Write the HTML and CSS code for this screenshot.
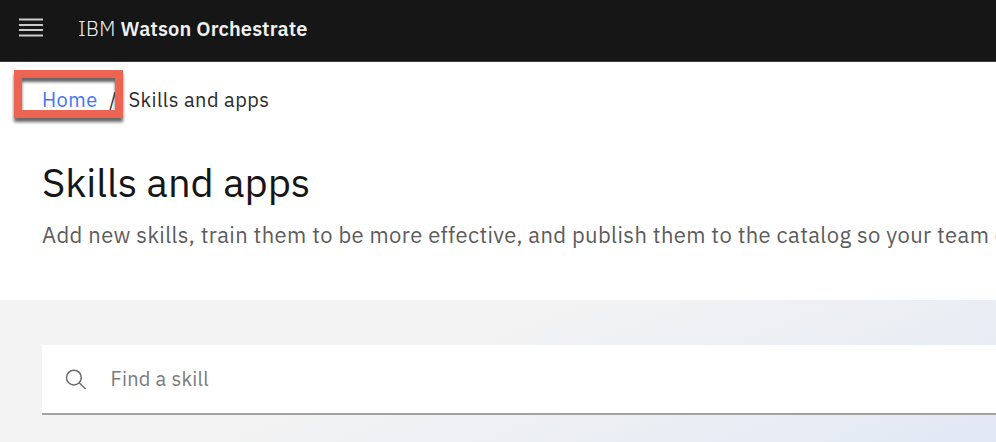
FILE: index.html
```html
<!DOCTYPE html>
<html lang="en">
<head>
<meta charset="utf-8">
<title>IBM Watson Orchestrate</title>
<link rel="stylesheet" href="styles.css">
</head>
<body>
<header class="topbar">
  <svg class="menu" width="24" height="20" viewBox="0 0 24 20" fill="none" stroke="#cbcbcb" stroke-width="2"><path d="M0 1.5h24M0 7h24M0 12h24M0 17.5h24"/></svg>
  <div class="brand"><span class="brand-ibm">IBM</span><strong class="brand-name">Watson Orchestrate</strong></div>
</header>
<section class="intro">
  <nav class="crumbs">
    <a class="home">Home</a><span class="slash">/</span><span class="current">Skills and apps</span>
    <div class="callout"></div>
  </nav>
  <h1 class="title">Skills and apps</h1>
  <p class="lead">Add new skills, train them to be more effective, and publish them to the catalog so your team c</p>
</section>
<main class="content">
  <div class="search">
    <svg class="search-icon" width="22" height="22" viewBox="0 0 22 22" fill="none" stroke="#6c6c6c" stroke-width="1.5"><circle cx="8.9" cy="9.6" r="7.4"/><path d="M14.2 14.8l6.4 6.2"/></svg>
    <span class="placeholder">Find a skill</span>
  </div>
</main>
</body>
</html>
```
FILE: styles.css
```css
* { box-sizing: border-box; }
body {
  margin: 0;
  width: 996px;
  height: 442px;
  overflow: hidden;
  display: flex;
  flex-direction: column;
  background: #fff;
  color: #161616;
  font-family: "IBM Plex Sans", Roboto, sans-serif;
}
.topbar {
  height: 62px;
  flex: none;
  display: flex;
  align-items: center;
  padding: 0 19px 5px;
  background: #161616;
  border-bottom: 1px solid #3a3a3a;
}
.menu { margin-right: 35px; }
.brand {
  display: flex;
  gap: 5.5px;
  color: #f0f0f0;
  font-size: 20px;
  line-height: 28px;
  white-space: nowrap;
  padding-top: 1px;
}
.brand-ibm { width: 37px; font-weight: 300; letter-spacing: .3px; }
.brand-name { font-weight: 600; letter-spacing: .14px; }
.intro { height: 238px; flex: none; padding-left: 42px; }
.crumbs {
  position: relative;
  display: flex;
  padding-top: 24px;
  font-size: 20px;
  line-height: 28px;
  white-space: nowrap;
}
.home { width: 67px; color: #3f76f6; letter-spacing: .45px; }
.slash { width: 19.5px; color: #333; }
.current { color: #2b2b2b; letter-spacing: .44px; }
.callout {
  position: absolute;
  left: -28px;
  top: 8px;
  width: 109px;
  height: 48px;
  border: 8px solid #ed6552;
  box-shadow: 0 4px 3px rgba(0,0,0,.6), inset 0 4px 3px rgba(0,0,0,.6);
}
.title {
  margin: 42px 0 0;
  font-size: 40px;
  line-height: 52px;
  font-weight: 400;
  letter-spacing: -.03px;
  white-space: nowrap;
}
.lead {
  margin: 12px 0 0;
  color: #5c5c5c;
  font-size: 22px;
  line-height: 30px;
  letter-spacing: .37px;
  white-space: nowrap;
}
.content {
  height: 142px;
  flex: none;
  padding: 45px 0 0 42px;
  background: linear-gradient(159deg, #f3f3f3 42%, #e9edf4 78%, #e0e8f4 102%);
}
.search {
  height: 70px;
  display: flex;
  align-items: center;
  padding-left: 23px;
  background: #fff;
  border-bottom: 2px solid #a0a2a4;
}
.search-icon { margin-right: 23.5px; }
.placeholder { color: #7b7b7b; font-size: 20px; line-height: 28px; letter-spacing: .25px; }
```
